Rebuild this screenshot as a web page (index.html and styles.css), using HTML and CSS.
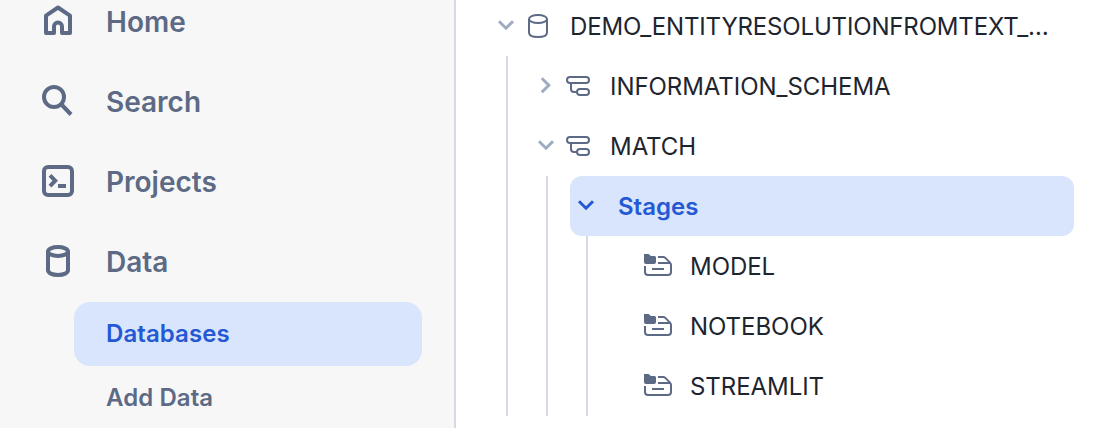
FILE: index.html
```html
<!DOCTYPE html>
<html lang="en">
<head>
<meta charset="utf-8">
<title>Databases</title>
<link rel="stylesheet" href="styles.css">
</head>
<body>
<svg class="sprite" aria-hidden="true">
  <symbol id="chevron-down" viewBox="0 0 24 24"><path d="M5 7.200l7 7 7-7" fill="none" stroke="currentColor" stroke-width="3"/></symbol>
  <symbol id="chevron-right" viewBox="0 0 24 24"><path d="M7.800 4.200l7 7-7 7" fill="none" stroke="currentColor" stroke-width="3"/></symbol>
  <symbol id="schema" viewBox="0 0 24 24"><g fill="none" stroke="currentColor" stroke-width="2"><rect x="1" y="3" width="22" height="6" rx="3"/><rect x="11" y="15" width="12" height="6" rx="3"/><path d="M5 9v6a3 3 0 0 0 3 3h3"/></g></symbol>
  <symbol id="stage" viewBox="0 0 28 24"><path d="M0 0h4.200q1 0 1.600.9T7.400 2H10.500a1.500 1.500 0 0 1 1.500 1.500V8a2 2 0 0 1-2 2H2A2 2 0 0 1 0 8z" fill="currentColor"/><path d="M14 3h5.200a3 3 0 0 1 2.100.9L26 8.600a3.500 3.500 0 0 1 1 2.500V18a3 3 0 0 1-3 3H4a3 3 0 0 1-3-3v-6M14 9h12.300M8 15h12" fill="none" stroke="currentColor" stroke-width="2"/></symbol>
</svg>
<div class="app">
  <nav class="sidebar">
    <a class="nav-item">
      <svg class="nav-icon" viewBox="0 0 32 32"><path stroke-linejoin="round" d="M4 10.700L16 2.500l12 8.200V28h-8v-6.500a4 4 0 0 0-8 0V28H4z"/></svg>
      <span>Home</span>
    </a>
    <a class="nav-item">
      <svg class="nav-icon" viewBox="0 0 32 32"><circle cx="12" cy="12" r="10"/><path d="M18.500 18.500l10.500 11"/></svg>
      <span>Search</span>
    </a>
    <a class="nav-item">
      <svg class="nav-icon" viewBox="0 0 32 32"><rect x="2" y="2" width="28" height="28" rx="4"/><path d="M8 10.300l5.200 5.400L8 21.100M16 21h8"/></svg>
      <span>Projects</span>
    </a>
    <a class="nav-item">
      <svg class="nav-icon" viewBox="0 0 32 32"><ellipse cx="16" cy="6.500" rx="10" ry="4.500"/><path d="M6 6.500v18.500C6 28 10 30 16 30s10-2 10-5V6.500"/></svg>
      <span>Data</span>
    </a>
    <div class="subnav">
      <a class="subnav-item subnav-item-active">Databases</a>
      <a class="subnav-item">Add Data</a>
    </div>
  </nav>
  <main class="tree">
    <div class="row row-root">
      <svg class="chevron"><use href="#chevron-down"/></svg>
      <svg class="db-icon" viewBox="0 0 24 24"><g fill="none" stroke="currentColor" stroke-width="2"><ellipse cx="12" cy="5" rx="9" ry="4"/><path d="M3 5v13.500C3 21.500 6.500 23 12 23s9-1.500 9-4.500V5"/></g></svg>
      <span class="label">DEMO_ENTITYRESOLUTIONFROMTEXT_…</span>
    </div>
    <div class="group group-root">
      <div class="row row-schema">
        <svg class="chevron"><use href="#chevron-right"/></svg>
        <svg class="schema-icon"><use href="#schema"/></svg>
        <span class="label">INFORMATION_SCHEMA</span>
      </div>
      <div class="row row-schema">
        <svg class="chevron"><use href="#chevron-down"/></svg>
        <svg class="schema-icon"><use href="#schema"/></svg>
        <span class="label">MATCH</span>
      </div>
      <div class="group">
        <div class="row row-selected">
          <svg class="chevron"><use href="#chevron-down"/></svg>
          <span class="label">Stages</span>
        </div>
        <div class="group">
          <div class="row row-stage"><svg class="stage-icon"><use href="#stage"/></svg><span class="label">MODEL</span></div>
          <div class="row row-stage"><svg class="stage-icon"><use href="#stage"/></svg><span class="label">NOTEBOOK</span></div>
          <div class="row row-stage"><svg class="stage-icon"><use href="#stage"/></svg><span class="label">STREAMLIT</span></div>
        </div>
      </div>
    </div>
  </main>
</div>
</body>
</html>
```

FILE: styles.css
```css
* { box-sizing: border-box; }

body {
  margin: 0;
  background: #fff;
  font-family: Inter, "Liberation Sans", sans-serif;
}

.sprite { display: none; }

.app {
  display: flex;
  height: 428px;
  overflow: hidden;
}

.sidebar {
  flex: none;
  width: 456px;
  border-right: 2px solid #d5d9e4;
  background: #f7f7f7;
  color: #5d6a85;
}

.nav-item {
  display: flex;
  align-items: center;
  gap: 32px;
  height: 80px;
  padding-left: 42px;
  font-size: 28px;
  font-weight: 600;
}

.nav-item:first-child {
  height: 62px;
  padding-bottom: 18px;
}

.nav-icon {
  flex: none;
  width: 32px;
  height: 32px;
  margin-bottom: 2px;
  fill: none;
  stroke: currentColor;
  stroke-width: 4;
}

.subnav { padding: 0 32px 0 74px; }

.subnav-item {
  display: flex;
  align-items: center;
  height: 64px;
  padding: 0 0 2px 32px;
  font-size: 24px;
  font-weight: 600;
  letter-spacing: 0.08px;
}

.subnav-item-active {
  border-radius: 16px;
  background: #d9e4fd;
  color: #2459d3;
}

.tree {
  flex: 1;
  min-width: 0;
  color: #1e252f;
}

.row {
  display: flex;
  align-items: center;
  height: 60px;
  font-size: 24px;
  letter-spacing: -0.05px;
  white-space: nowrap;
}

.row-root {
  height: 56px;
  padding: 0 0 4px 38px;
  letter-spacing: -0.16px;
}

.row-schema { padding-left: 26px; }

.row-selected {
  margin: 0 24px 0 22px;
  padding-left: 4px;
  border-radius: 12px;
  background: #d9e4fd;
  color: #2459d3;
  font-weight: 600;
  letter-spacing: 0;
}

.row-stage { padding-left: 56px; }

.group {
  margin-left: 38px;
  border-left: 2px solid #d5d9e4;
}

.group-root { margin-left: 50px; }

.chevron,
.db-icon,
.schema-icon {
  flex: none;
  width: 24px;
  height: 24px;
}

.chevron {
  margin-right: 8px;
  color: #9fabc1;
}

.row-selected .chevron {
  margin-right: 20px;
  color: #2459d3;
}

.db-icon,
.schema-icon {
  margin-right: 20px;
  color: #5d6a85;
}

.stage-icon {
  flex: none;
  width: 28px;
  height: 24px;
  margin-right: 18px;
  color: #5d6a85;
}
```
